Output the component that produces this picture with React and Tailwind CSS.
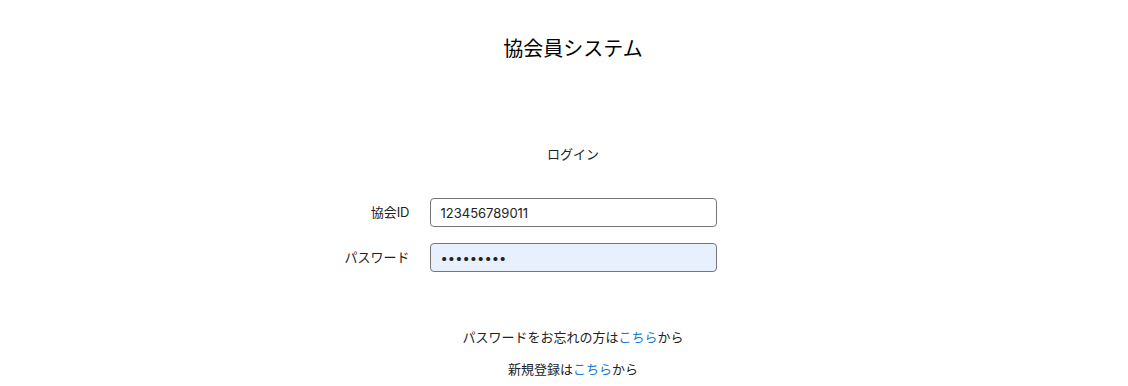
import React from 'react';

const font = { fontFamily: 'Inter, "Noto Sans CJK JP", sans-serif' };

const App = () => {
  return (
    <div className="min-h-[386px] bg-white pl-[18px] text-[#222]" style={font}>
      <h1 className="pt-[37px] text-center text-[20px] leading-[24px] text-black">協会員システム</h1>

      <p className="mt-[83px] text-center text-[13px] leading-[20px] text-[#222]">ログイン</p>

      <form className="mt-[34px] flex flex-col gap-[16px]">
        <div className="flex items-center justify-center">
          <label className="w-[140px] pr-[20px] text-right text-[13px]">協会ID</label>
          <input
            type="text"
            defaultValue="123456789011"
            className="h-[29px] w-[287px] rounded-[4px] border border-[#767676] bg-white px-[10px] text-[13px] outline-none"
            style={font}
          />
          <div className="w-[140px]" />
        </div>
        <div className="flex items-center justify-center">
          <label className="w-[140px] pr-[20px] text-right text-[13px]">パスワード</label>
          <input
            type="password"
            defaultValue="123456789"
            className="h-[29px] w-[287px] rounded-[4px] border border-[#767676] bg-[#e8f0fe] px-[10px] text-[13px] outline-none"
            style={font}
          />
          <div className="w-[140px]" />
        </div>
      </form>

      <p className="mt-[55px] text-center text-[13px] leading-[20px]">
        パスワードをお忘れの方は<a href="#" className="text-[#1a7bd0]">こちら</a>から
      </p>
      <p className="mt-[12px] text-center text-[13px] leading-[20px]">
        新規登録は<a href="#" className="text-[#1a7bd0]">こちら</a>から
      </p>
    </div>
  );
};

export default App;
